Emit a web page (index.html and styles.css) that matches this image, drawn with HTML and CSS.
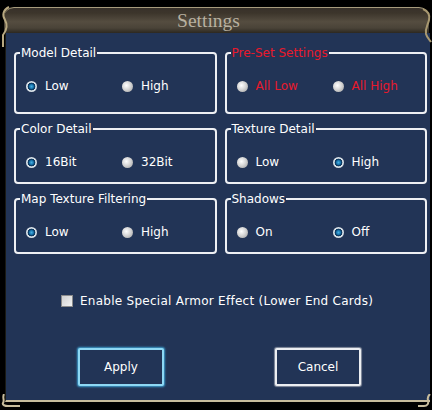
FILE: index.html
```html
<!DOCTYPE html>
<html>
<head>
<meta charset="utf-8">
<link rel="stylesheet" href="styles.css">
</head>
<body>
<div class="window">
  <div class="titlebar"><span class="title">Settings</span></div>
  <div class="panel">
    <div class="groups">
      <fieldset class="group">
        <legend>Model Detail</legend>
        <div class="options">
          <label class="opt"><span class="radio on"></span>Low</label>
          <label class="opt"><span class="radio"></span>High</label>
        </div>
      </fieldset>
      <fieldset class="group">
        <legend class="red">Pre-Set Settings</legend>
        <div class="options red">
          <label class="opt"><span class="radio"></span>All Low</label>
          <label class="opt"><span class="radio"></span>All High</label>
        </div>
      </fieldset>
      <fieldset class="group">
        <legend>Color Detail</legend>
        <div class="options">
          <label class="opt"><span class="radio on"></span>16Bit</label>
          <label class="opt"><span class="radio"></span>32Bit</label>
        </div>
      </fieldset>
      <fieldset class="group">
        <legend>Texture Detail</legend>
        <div class="options">
          <label class="opt"><span class="radio"></span>Low</label>
          <label class="opt"><span class="radio on"></span>High</label>
        </div>
      </fieldset>
      <fieldset class="group">
        <legend>Map Texture Filtering</legend>
        <div class="options">
          <label class="opt"><span class="radio on"></span>Low</label>
          <label class="opt"><span class="radio"></span>High</label>
        </div>
      </fieldset>
      <fieldset class="group">
        <legend>Shadows</legend>
        <div class="options">
          <label class="opt"><span class="radio"></span>On</label>
          <label class="opt"><span class="radio on"></span>Off</label>
        </div>
      </fieldset>
    </div>
    <label class="check-row"><span class="checkbox"></span>Enable Special Armor Effect (Lower End Cards)</label>
    <div class="buttons">
      <button class="btn apply">Apply</button>
      <button class="btn cancel">Cancel</button>
    </div>
  </div>
  <svg class="orn orn-tl" width="12" height="42" viewBox="0 0 12 42"><path d="M9 2 C3 5 2 10 5 15 C8 20 6 26 3 30 L3 42" fill="none" stroke="#b8a880" stroke-width="2"/></svg>
  <svg class="orn orn-tr" width="10" height="42" viewBox="0 0 10 42"><path d="M1 3 C6 5 8 9 7 14 C6 19 3 22 4 28 C5 32 8 34 9 36" fill="none" stroke="#a89870" stroke-width="2"/></svg>
  <svg class="orn orn-bl" width="20" height="16" viewBox="0 0 20 16"><path d="M4 0 C2 4 5 6 3 9 C2 11 5 12 8 12 L20 12" fill="none" stroke="#c8bc9c" stroke-width="2"/></svg>
  <svg class="orn orn-br" width="14" height="16" viewBox="0 0 14 16"><path d="M0 12 L6 12 C9 12 11 10 10 6 C9 3 11 1 12 0" fill="none" stroke="#c8bc9c" stroke-width="2"/></svg>
</div>
</body>
</html>
```
FILE: styles.css
```css
html, body {
  margin: 0;
  padding: 0;
  background: #000;
}
body {
  width: 432px;
  height: 410px;
  overflow: hidden;
  font-family: "DejaVu Sans", Verdana, sans-serif;
  font-size: 12px;
  color: #fff;
}
.window {
  position: relative;
  width: 432px;
  height: 410px;
  padding-top: 7px;
  box-sizing: border-box;
}
.titlebar {
  margin: 0 3px 0 4px;
  height: 26px;
  box-sizing: border-box;
  border-top: 1px solid #a89c7e;
  border-radius: 10px 10px 0 0;
  background: linear-gradient(#38312a 0%, #3c352b 20%, #554d40 55%, #4a4338 80%, #2c2820 100%);
  display: flex;
  align-items: center;
  justify-content: center;
}
.title {
  font-family: "Liberation Serif", "Times New Roman", serif;
  font-size: 19.5px;
  color: #b8b0a0;
  margin-right: 16px;
  line-height: 24px;
}
.panel {
  margin: 0 2px 0 5px;
  height: 369px;
  box-sizing: border-box;
  background: #223456;
  border-bottom: 2px solid #c8bc9c;
  border-left: 1px solid #1a1a14;
  padding: 13px 3px 0 8px;
}
.groups {
  display: grid;
  grid-template-columns: 1fr 1fr;
  grid-template-rows: 68px 62px 62px;
  column-gap: 8px;
  row-gap: 8px;
}
.group {
  margin: 0;
  min-width: 0;
  border: 2px solid #eef0f4;
  border-radius: 4px;
  padding: 0;
}
.group legend {
  line-height: 14px;
  padding: 0 1px;
  margin-left: 4px;
  color: #fff;
}
.group legend.red,
.options.red {
  color: #e8192c;
}
.options {
  display: grid;
  grid-template-columns: 96px auto;
  padding: 19px 0 0 10px;
}
.opt {
  display: flex;
  align-items: center;
  line-height: 14px;
}
.radio {
  width: 11px;
  height: 11px;
  border-radius: 50%;
  margin-right: 8px;
  background: radial-gradient(circle at 40% 40%, #ffffff 0, #d6d6d6 45%, #9a9a9a 100%);
  flex: none;
}
.radio.on {
  background: radial-gradient(circle at 50% 50%, #48aee0 0, #1a78b0 2px, #0c3e68 3px, #103a60 3.6px, #dfe6ec 4.2px, #b8c0c8 100%);
}
.check-row {
  display: flex;
  align-items: center;
  line-height: 14px;
  margin-top: 40px;
  padding-left: 47px;
  letter-spacing: 0.27px;
}
.checkbox {
  width: 10px;
  height: 10px;
  border: 1px solid #8a8a8a;
  background: linear-gradient(135deg, #d0d0d0, #f2f2f2);
  margin-right: 7px;
  flex: none;
}
.buttons {
  display: flex;
  gap: 111px;
  margin-top: 40px;
  padding-left: 64px;
}
.btn {
  width: 86px;
  height: 38px;
  box-sizing: border-box;
  background: #223456;
  color: #fff;
  font-family: "DejaVu Sans", Verdana, sans-serif;
  font-size: 12px;
  border-radius: 2px;
  padding: 0;
}
.btn.apply {
  border: 2px solid #8ed8f4;
  box-shadow: 0 0 2px 1px #3c9ccc;
}
.btn.cancel {
  border: 2px solid #eceef2;
  box-shadow: 0 0 1px 1px #8890a0;
}
.orn {
  position: absolute;
}
.orn-tl { left: 0; top: 5px; }
.orn-tr { right: 0; top: 6px; }
.orn-bl { left: 0; bottom: 0; }
.orn-br { right: 0; bottom: 0; }
```
